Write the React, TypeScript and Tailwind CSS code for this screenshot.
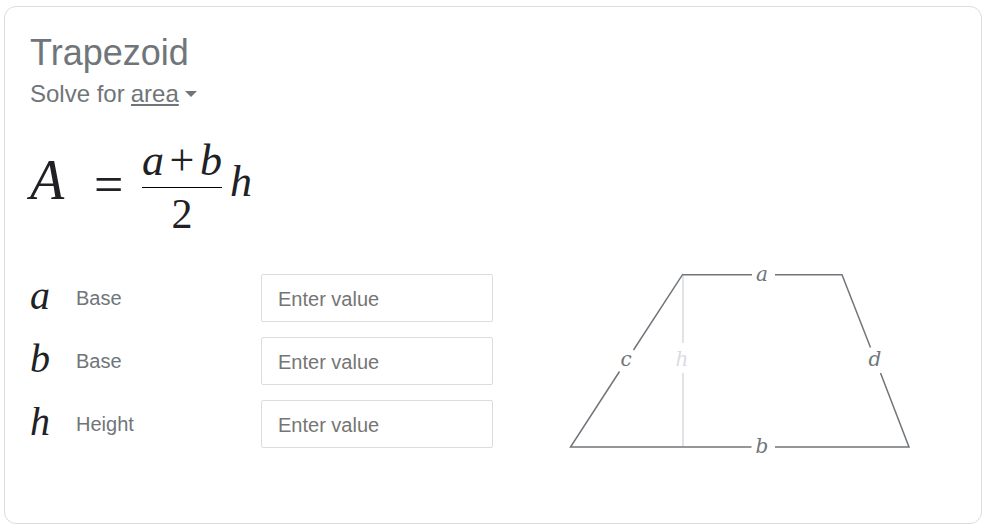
import React from 'react';

const fields = [
  { symbol: 'a', name: 'Base' },
  { symbol: 'b', name: 'Base' },
  { symbol: 'h', name: 'Height' },
];

function Header() {
  return (
    <header>
      <h1 className="text-4xl leading-[44px]">Trapezoid</h1>
      <div className="mt-[5px] flex items-center text-2xl leading-7">
        <label htmlFor="target" className="mr-1.5">
          Solve for
        </label>
        <select
          id="target"
          className="field-sizing-content h-7 cursor-pointer appearance-none underline decoration-2 underline-offset-2 outline-none"
        >
          <option>area</option>
        </select>
        <svg className="ml-1.5 h-[6px] w-[12px]" viewBox="0 0 12 6" fill="currentColor" aria-hidden="true">
          <path d="M0 0h12L6 6z" />
        </svg>
      </div>
    </header>
  );
}

function Formula() {
  return (
    <div className="mt-[31px] flex h-24 items-center font-['Liberation_Serif',serif] text-[#202124]">
      <i className="w-16 pb-3.5 text-[56px] leading-[64px]">A</i>
      <span className="w-12 pb-1 text-[52px] leading-[64px]">=</span>
      <div className="flex w-20 flex-col items-center text-[44px]">
        <div className="flex w-full justify-between border-b border-black pb-1 leading-[44px]">
          <i>a</i>
          <span>+</span>
          <i>b</i>
        </div>
        <span className="pt-1 text-[42px] leading-[44px]">2</span>
      </div>
      <i className="ml-2 pb-2.5 text-[44px] leading-[44px]">h</i>
    </div>
  );
}

function Fields() {
  return (
    <form className="flex w-[463px] flex-col gap-[15px]">
      {fields.map((f) => (
        <div key={f.symbol} className="flex h-12 items-center justify-between">
          <label htmlFor={`field-${f.symbol}`} className="flex items-center text-xl">
            <i className="w-[46px] pb-1 font-['Liberation_Serif',serif] text-[40px] leading-[44px] text-[#202124]">
              {f.symbol}
            </i>
            {f.name}
          </label>
          <input
            id={`field-${f.symbol}`}
            type="text"
            placeholder="Enter value"
            className="h-12 w-58 rounded-xs border border-[#dadce0] px-4 pt-0.5 text-xl outline-none placeholder:text-[#757575]"
          />
        </div>
      ))}
    </form>
  );
}

function Diagram() {
  return (
    <svg className="h-[202px] w-[342px]" viewBox="568 260 342 202" role="img" aria-label="Trapezoid diagram">
      <path d="M683 276V343M683 373V446" stroke="#dadce0" strokeWidth="1.6" />
      <path
        d="M752 274.7H682.5L633.5 350M619.5 371.5L570.5 447H751.5M775 447H909L880.5 373M870.5 347.5L842 274.7H775"
        fill="none"
        stroke="#70757a"
        strokeWidth="1.5"
      />
      <g
        className="font-['DejaVu_Serif',serif] text-xl italic"
        fill="#70757a"
        textAnchor="middle"
      >
        <text x="762" y="281">a</text>
        <text x="762" y="453">b</text>
        <text x="626" y="366">c</text>
        <text x="875" y="366">d</text>
        <text x="682" y="366" fill="#dadce0">h</text>
      </g>
    </svg>
  );
}

export default function App() {
  return (
    <main className="min-h-screen bg-white pt-[6px] pr-[3px] pb-[5px] pl-1 font-['Liberation_Sans',Arial,sans-serif] text-[#70757a]">
      <section className="min-h-[518px] rounded-xl border border-[#dadce0] px-[25px] pt-6">
        <Header />
        <Formula />
        <div className="mt-[25px] flex flex-wrap items-start">
          <div className="pt-[14px]">
            <Fields />
          </div>
          <div className="flex flex-1 justify-center pl-7">
            <Diagram />
          </div>
        </div>
      </section>
    </main>
  );
}
